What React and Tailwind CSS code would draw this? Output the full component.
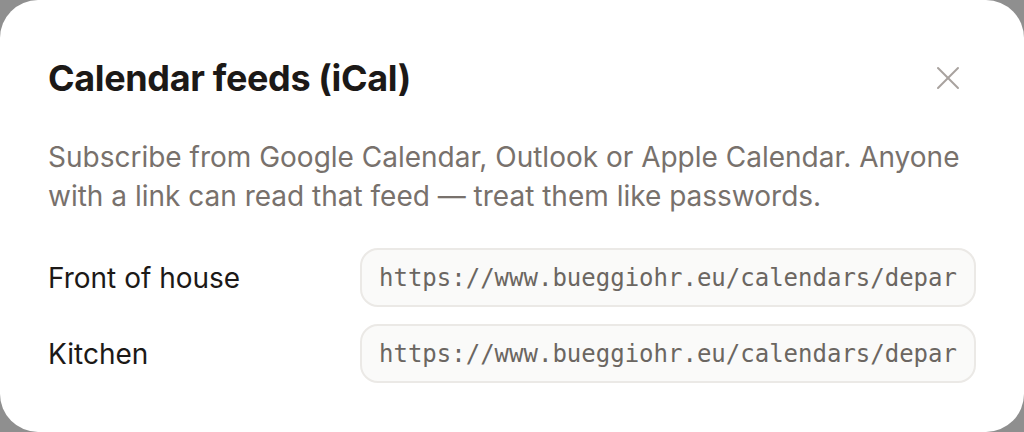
import { X } from 'lucide-react';

const feeds = [
    { name: 'Front of house', url: 'https://www.bueggiohr.eu/calendars/department/front-of-house/7f3a9c2e41b8.ics' },
    { name: 'Kitchen', url: 'https://www.bueggiohr.eu/calendars/department/kitchen/c81d5e0a93f7.ics' },
]

export default function App() {
    return (
        <div className="h-[432px] w-full bg-[#8f8f8f] font-['Inter',sans-serif]">
            <div className="flex h-full flex-col rounded-[38px] bg-white px-12 pt-[58px]">
                <div className="flex items-center justify-between">
                    <h1 className="text-[36px] leading-10 font-bold tracking-[-0.01em] text-[#1c1917]">Calendar feeds (iCal)</h1>
                    <button className="-my-2 flex h-10 w-14 items-center justify-center text-[#a8a29e]">
                        <X size={40} strokeWidth={1.2} />
                    </button>
                </div>

                <p className="mt-10 text-[28px] leading-[39px] text-[#78716c]">
                    Subscribe from Google Calendar, Outlook or Apple Calendar. Anyone with a link can read that feed — treat them like passwords.
                </p>

                {/* one row per department feed */}
                <div className="mt-8 grid grid-cols-[296px_1fr] items-center gap-x-4 gap-y-[17px]">
                    {feeds.map((feed) => (
                        <div key={feed.name} className="contents">
                            <span className="text-[28px] text-[#1c1917]">{feed.name}</span>
                            <input
                                readOnly
                                value={feed.url}
                                className="h-[59px] w-full rounded-[18px] border-2 border-[#ebe9e6] bg-[#fafaf9] px-[17px] font-['DejaVu_Sans_Mono',monospace] text-[24px] text-[#6b6661] outline-none"
                            />
                        </div>
                    ))}
                </div>
            </div>
        </div>
    )
}
